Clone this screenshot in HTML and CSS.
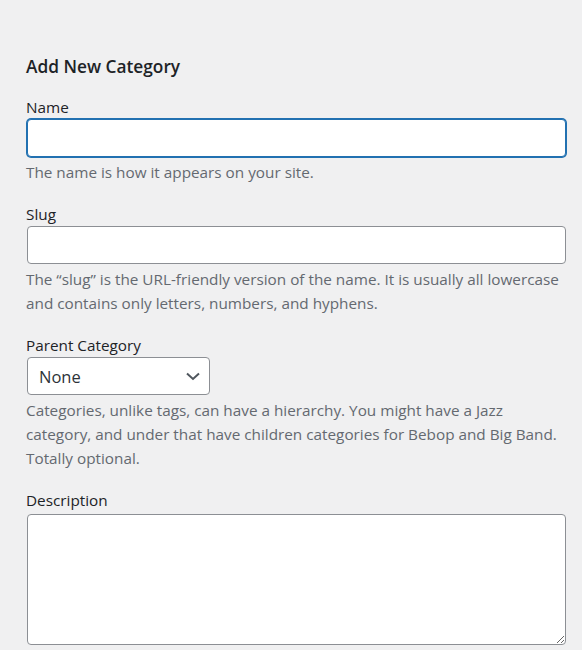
FILE: index.html
```html
<!DOCTYPE html>
<html lang="en">
  <head>
    <meta charset="UTF-8" />
    <meta name="viewport" content="width=device-width, initial-scale=1.0" />
    <title>Add New Category</title>
    <link rel="stylesheet" href="styles.css">
  </head>
  <body>
    <div class="form-wrap">
      <h2>Add New Category</h2>
      <form>
        <div class="form-field">
          <label for="tag-name">Name</label>
          <input type="text" id="tag-name" class="focused" />
          <p>The name is how it appears on your site.</p>
        </div>
        <div class="form-field">
          <label for="tag-slug">Slug</label>
          <input type="text" id="tag-slug" />
          <p>The “slug” is the URL-friendly version of the name. It is usually all lowercase and contains only letters, numbers, and hyphens.</p>
        </div>
        <div class="form-field">
          <label for="parent">Parent Category</label>
          <select id="parent" class="postform">
            <option>None</option>
          </select>
          <p class="narrow">Categories, unlike tags, can have a hierarchy. You might have a Jazz category, and under that have children categories for Bebop and Big Band. Totally optional.</p>
        </div>
        <div class="form-field">
          <label for="tag-description" class="last">Description</label>
          <textarea id="tag-description"></textarea>
        </div>
      </form>
    </div>
  </body>
</html>
```

FILE: styles.css
```css
body {
  margin: 0;
  background: #f0f0f1;
  color: #3c434a;
  font-family: "Open Sans", "Noto Sans", sans-serif;
  font-size: 15.3px;
  line-height: 24px;
}

.form-wrap {
  padding: 55px 15px 0 26px;
}

h2 {
  margin: 0 0 16px;
  font-size: 17.3px;
  line-height: 24px;
  font-weight: 600;
  color: #1d2327;
}

.form-field {
  margin-bottom: 18px;
}

label {
  display: block;
  color: #1d2327;
}

label.last {
  margin-bottom: 2px;
}

input,
select,
textarea {
  display: block;
  box-sizing: border-box;
  width: calc(100% - 2px);
  margin: 0 1px;
  background: #fff;
  border: 1px solid #8c8f94;
  border-radius: 4px;
  font-family: inherit;
  font-size: 16.5px;
  color: #2c3338;
}

input {
  height: 38px;
  padding: 0 8px;
}

input.focused {
  border-color: #2271b1;
  box-shadow: 0 0 0 1px #2271b1;
  outline: none;
}

select {
  width: 183px;
  height: 38px;
  padding: 0 24px 0 11px;
  appearance: none;
  background: #fff url("data:image/svg+xml;charset=utf8,%3Csvg xmlns='http://www.w3.org/2000/svg' width='14' height='9'%3E%3Cpath d='M1 1.5l6 5.5 6-5.5' fill='none' stroke='%2350575e' stroke-width='2'/%3E%3C/svg%3E") no-repeat right 9px center;
  background-size: 14px 9px;
}

textarea {
  height: 131px;
  padding: 4px 8px;
}

p {
  margin: 3px 0 0;
  color: #646970;
}

p.narrow {
  max-width: 538px;
}
```
